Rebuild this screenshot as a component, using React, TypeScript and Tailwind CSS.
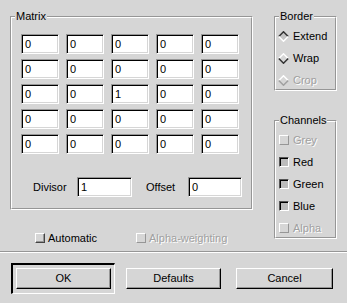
import type { ReactNode } from "react";

const font = "font-['Liberation_Sans',Arial,sans-serif]";

function Frame({ label, className, children }: { label: string; className: string; children: ReactNode }) {
  return (
    <div className={`relative border border-t-[#969696] border-l-[#969696] border-r-white border-b-white ${className}`}>
      <div className="h-full w-full border border-t-white border-l-white border-r-[#969696] border-b-[#969696]">
        {children}
      </div>
      <span className="absolute left-[4px] top-[-8px] bg-[#d6d6d6] px-[1px] text-[11px] leading-[14px] text-black">
        {label}
      </span>
    </div>
  );
}

function Field({ value, className }: { value: string; className: string }) {
  return (
    <div
      className={`flex items-center border border-t-[#969696] border-l-[#969696] border-r-white border-b-white bg-white pl-[3px] text-[11px] text-black [-webkit-font-smoothing:antialiased] shadow-[inset_1px_1px_0_#000,inset_-1px_-1px_0_#d6d6d6] ${className}`}
    >
      {value}
    </div>
  );
}

function Check({ label, on, disabled }: { label: string; on?: boolean; disabled?: boolean }) {
  const box = on
    ? "border-t-[#555] border-l-[#555] border-r-white border-b-white bg-[#bcbcbc] shadow-[inset_1px_1px_0_#000]"
    : disabled
      ? "border-t-white border-l-white border-r-[#969696] border-b-[#969696] bg-[#d6d6d6]"
      : "border-t-white border-l-white border-r-[#444] border-b-[#444] bg-[#d6d6d6] shadow-[inset_-1px_-1px_0_#969696]";
  return (
    <div className="flex h-[22px] items-center gap-[4px]">
      <span className={`block h-[10px] w-[10px] border ${box}`} />
      <span
        className={`text-[11px] leading-[14px] ${disabled ? "text-[#a0a0a0] [text-shadow:1px_1px_0_#fff]" : "text-black"}`}
      >
        {label}
      </span>
    </div>
  );
}

function Radio({ label, on, disabled }: { label: string; on?: boolean; disabled?: boolean }) {
  const top = on ? "#333" : "#fff";
  const bottom = on ? "#fff" : disabled ? "#a0a0a0" : "#333";
  return (
    <div className="flex h-[22px] items-center gap-[4px]">
      <svg width="11" height="11" viewBox="0 0 11 11" className="block">
        <polygon points="5.5,1 10,5.5 5.5,10 1,5.5" fill={on ? "#c4c4c4" : "#d6d6d6"} />
        <polyline points="0.8,5.5 5.5,0.8 10.2,5.5" fill="none" stroke={top} strokeWidth="1.5" />
        <polyline points="0.8,5.5 5.5,10.2 10.2,5.5" fill="none" stroke={bottom} strokeWidth="1.5" />
      </svg>
      <span
        className={`text-[11px] leading-[14px] ${disabled ? "text-[#a0a0a0] [text-shadow:1px_1px_0_#fff]" : "text-black"}`}
      >
        {label}
      </span>
    </div>
  );
}

function Button({ label, className }: { label: string; className: string }) {
  return (
    <div
      className={`flex h-[21px] items-center justify-center border border-t-white border-l-white border-r-black border-b-black text-[11px] text-black shadow-[inset_-1px_-1px_0_#969696] ${className}`}
    >
      {label}
    </div>
  );
}

const matrix = [
  ["0", "0", "0", "0", "0"],
  ["0", "0", "0", "0", "0"],
  ["0", "0", "1", "0", "0"],
  ["0", "0", "0", "0", "0"],
  ["0", "0", "0", "0", "0"],
];

export default function App() {
  return (
    <div className={`flex h-[303px] w-[347px] flex-col bg-[#d6d6d6] ${font}`}>
      {/* Top area */}
      <div className="flex h-[251px] pl-[10px] pt-[16px]">
        <div className="flex flex-col">
          <Frame label="Matrix" className="h-[194px] w-[243px]">
            <div className="pl-[9px] pt-[16px]">
              <div className="grid grid-cols-[repeat(5,38px)] gap-x-[7px] gap-y-[5px]">
                {matrix.flat().map((v, i) => (
                  <Field key={i} value={v} className="h-[20px]" />
                ))}
              </div>
              <div className="mt-[23px] flex items-center pl-[12px]">
                <span className="w-[44px] text-[11px] text-black">Divisor</span>
                <Field value="1" className="h-[20px] w-[55px]" />
                <span className="ml-[14px] w-[42px] text-[11px] text-black">Offset</span>
                <Field value="0" className="h-[20px] w-[54px]" />
              </div>
            </div>
          </Frame>
          <div className="mt-[17px] flex items-center pl-[25px]">
            <div className="w-[101px] [&>div]:gap-[3px]">
              <Check label="Automatic" />
            </div>
            <div className="[&>div]:gap-[3px]">
              <Check label="Alpha-weighting" disabled />
            </div>
          </div>
        </div>

        <div className="ml-[21px] flex flex-col">
          <Frame label="Border" className="h-[75px] w-[63px]">
            <div className="pl-[2px] pt-[7px]">
              <Radio label="Extend" on />
              <Radio label="Wrap" />
              <Radio label="Crop" disabled />
            </div>
          </Frame>
          <Frame label="Channels" className="mt-[29px] h-[119px] w-[63px]">
            <div className="pl-[3px] pt-[7px]">
              <Check label="Grey" disabled />
              <Check label="Red" on />
              <Check label="Green" on />
              <Check label="Blue" on />
              <Check label="Alpha" disabled />
            </div>
          </Frame>
        </div>
      </div>

      {/* Separator */}
      <div className="border-t border-b border-t-[#969696] border-b-white" />

      {/* Buttons */}
      <div className="mt-[10px] flex items-start pl-[11px]">
        <div className="h-[31px] w-[104px] border-t-2 border-l-2 border-r border-b border-t-black border-l-black border-r-white border-b-white p-[3px]">
          <Button label="OK" className="w-[95px]" />
        </div>
        <Button label="Defaults" className="ml-[11px] mt-[5px] w-[95px]" />
        <Button label="Cancel" className="ml-[15px] mt-[5px] w-[97px]" />
      </div>
    </div>
  );
}
